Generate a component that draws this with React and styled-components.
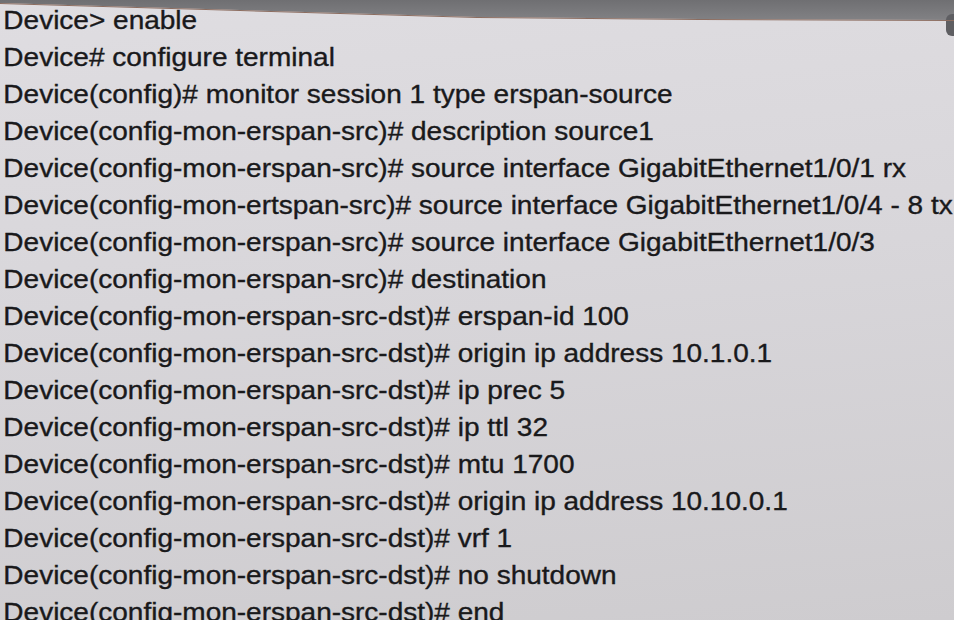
import React from "react";
import styled, { createGlobalStyle } from "styled-components";

const Global = createGlobalStyle`
  html, body { margin: 0; padding: 0; background: #d6d4d8; }
  body { width: 954px; height: 620px; overflow: hidden; }
  #root { width: 954px; height: 620px; }
`;

const Screen = styled.div`
  position: relative;
  width: 954px;
  height: 620px;
  overflow: hidden;
  background: linear-gradient(175deg, #dfdde1 0%, #d8d6da 45%, #cecccf 100%);
  &::before {
    content: "";
    position: absolute;
    left: 0;
    top: 0;
    width: 954px;
    height: 24px;
    background: linear-gradient(180deg, #6f6f72 0%, #858588 100%);
    clip-path: polygon(0 0, 954px 0, 954px 20px, 700px 19px, 477px 17px, 240px 10px, 0 3px);
  }
  &::after {
    content: "";
    position: absolute;
    left: 0;
    top: 0;
    width: 954px;
    height: 24px;
    background: #8c6d60;
    clip-path: polygon(0 3px, 240px 10px, 477px 17px, 700px 19px, 954px 20px, 954px 21px, 700px 20px, 477px 18px, 240px 11px, 0 4px);
  }
`;

const Corner = styled.div`
  position: absolute;
  right: -6px;
  top: 14px;
  width: 14px;
  height: 22px;
  border-radius: 6px;
  background: #5e5e62;
`;

const Terminal = styled.div`
  padding: 2px 0 0 3px;
  font-family: "Liberation Sans", Arial, Helvetica, sans-serif;
  font-size: 25px;
  line-height: 37px;
  color: #19191b;
  -webkit-text-stroke: 0.35px #19191b;
  white-space: pre;
  transform: scaleX(1.12);
  transform-origin: left top;
`;

const Line = styled.div`
  height: 37px;
`;

const lines = [
  "Device> enable",
  "Device# configure terminal",
  "Device(config)# monitor session 1 type erspan-source",
  "Device(config-mon-erspan-src)# description source1",
  "Device(config-mon-erspan-src)# source interface GigabitEthernet1/0/1 rx",
  "Device(config-mon-ertspan-src)# source interface GigabitEthernet1/0/4 - 8 tx",
  "Device(config-mon-erspan-src)# source interface GigabitEthernet1/0/3",
  "Device(config-mon-erspan-src)# destination",
  "Device(config-mon-erspan-src-dst)# erspan-id 100",
  "Device(config-mon-erspan-src-dst)# origin ip address 10.1.0.1",
  "Device(config-mon-erspan-src-dst)# ip prec 5",
  "Device(config-mon-erspan-src-dst)# ip ttl 32",
  "Device(config-mon-erspan-src-dst)# mtu 1700",
  "Device(config-mon-erspan-src-dst)# origin ip address 10.10.0.1",
  "Device(config-mon-erspan-src-dst)# vrf 1",
  "Device(config-mon-erspan-src-dst)# no shutdown",
  "Device(config-mon-erspan-src-dst)# end",
];

export default function App() {
  return (
    <>
      <Global />
      <Screen>
        <Corner />
        <Terminal>
          {lines.map((l, i) => (
            <Line key={i}>{l}</Line>
          ))}
        </Terminal>
      </Screen>
    </>
  );
}
